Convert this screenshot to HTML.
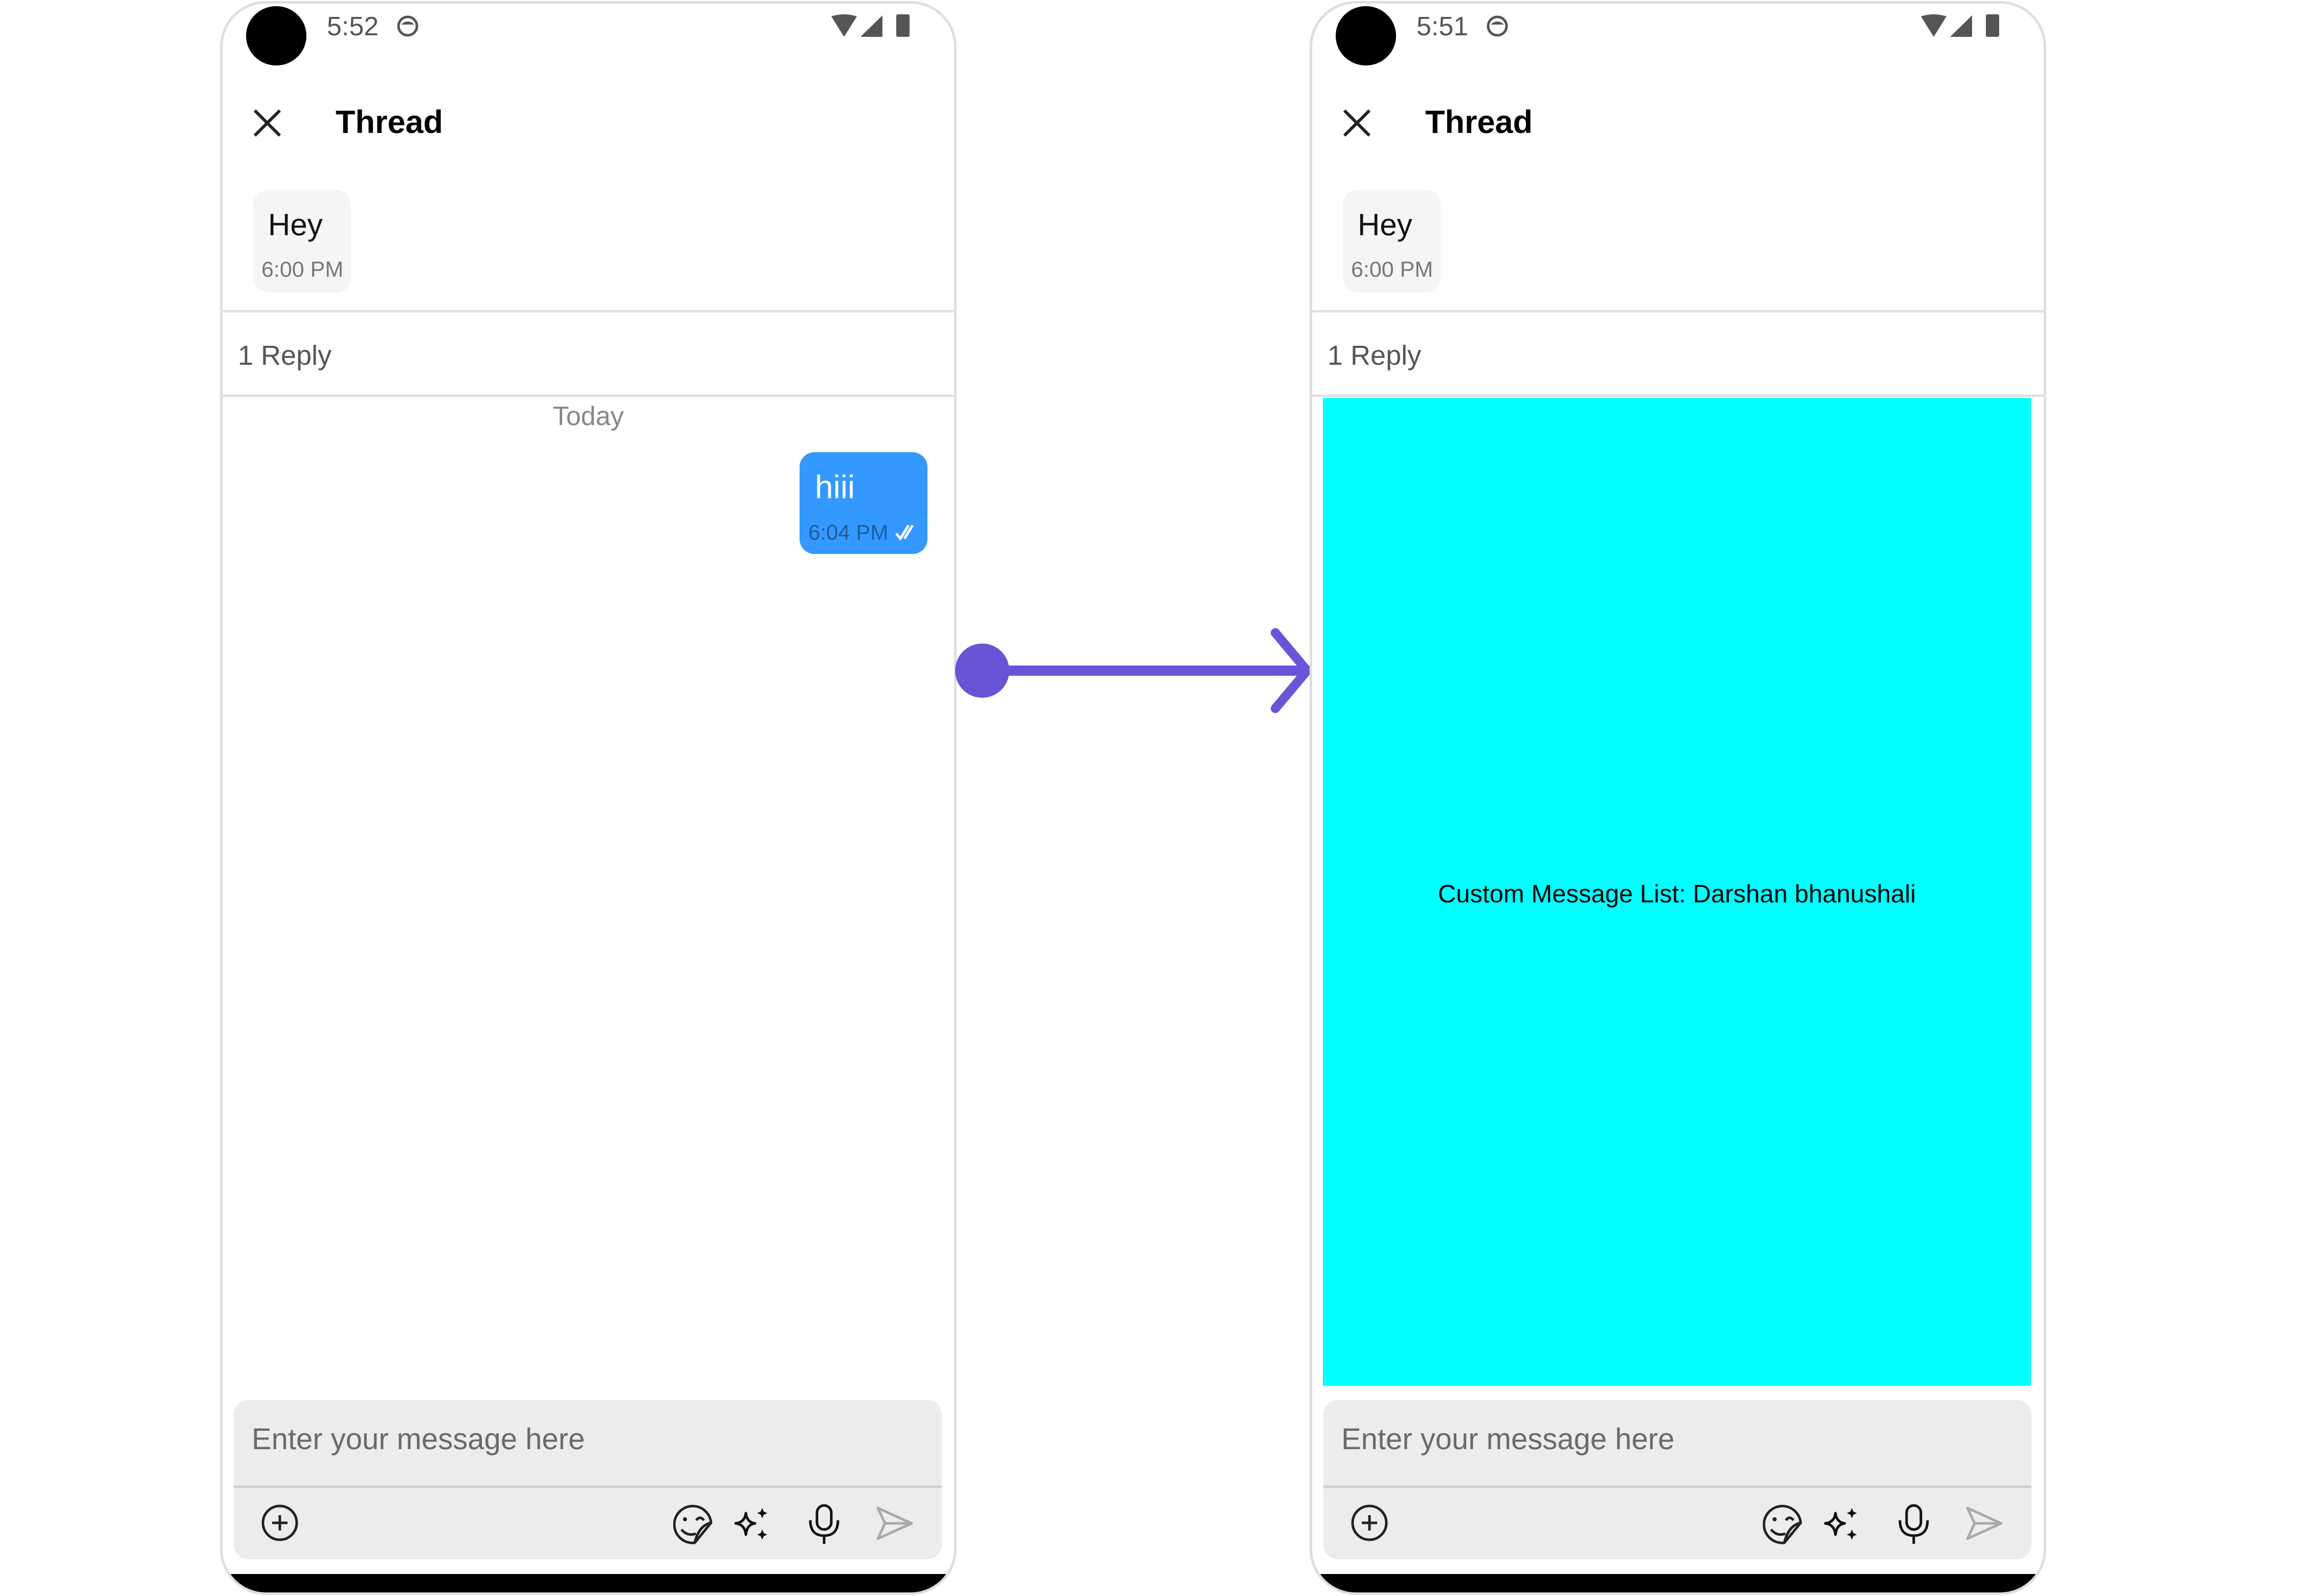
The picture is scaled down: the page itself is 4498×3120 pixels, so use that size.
<!DOCTYPE html>
<html><head><meta charset="utf-8"><style>
*{margin:0;padding:0;box-sizing:border-box}
body{width:4498px;height:3120px;background:#fff;position:relative;overflow:hidden;font-family:"Liberation Sans",sans-serif}
.ph{position:absolute;top:0;width:1440px;height:3120px}
.frame{position:absolute;left:0;top:2px;width:1440px;height:3116px;border:5px solid #dedede;border-radius:90px;overflow:hidden;background:#fff}
.a{position:absolute;white-space:nowrap}
.dv{position:absolute;left:0;width:1440px;height:5px;background:#e2e2e2}
</style></head><body>

<!-- LEFT PHONE -->
<div class="ph" style="left:430px">
 <div class="frame">
  <div class="a" style="left:0;top:3070px;width:1440px;height:60px;background:#000"></div>
  <div class="a" style="left:536px;top:3108px;width:378px;height:8px;background:#ddd;border-radius:4px"></div>
 </div>
 <div class="a" style="left:51px;top:12px;width:118px;height:116px;border-radius:50%;background:#000"></div>
 <div class="a" style="left:209px;top:22px;font-size:52px;color:#555">5:52</div>
 <svg class="a" style="left:344px;top:28px" width="46" height="46" viewBox="0 0 46 46"><circle cx="23" cy="23" r="18" fill="none" stroke="#555" stroke-width="5"/><path d="M10 20 Q23 8 36 20" fill="#555"/></svg>
 <svg class="a" style="left:1195px;top:28px" width="170" height="46" viewBox="0 0 170 46"><path d="M0 4 Q25 -4 50 4 L25 44Z" fill="#555"/><path d="M57 44 L100 2 L100 44Z" fill="#555"/><rect x="127" y="0" width="26" height="44" rx="3" fill="#555"/></svg>
 <svg class="a" style="left:65px;top:213px" width="55" height="55" viewBox="0 0 55 55"><path d="M3 3L52 52M52 3L3 52" stroke="#222" stroke-width="6"/></svg>
 <div class="a" style="left:226px;top:203px;font-size:63px;font-weight:bold;color:#000">Thread</div>
 <div class="a" style="left:65px;top:371px;width:191px;height:201px;background:#f5f5f5;border-radius:29px"></div>
 <div class="a" style="left:94px;top:405px;font-size:60px;color:#111">Hey</div>
 <div class="a" style="left:81px;top:503px;font-size:43px;color:#777">6:00 PM</div>
 <div class="dv" style="top:606px"></div>
 <div class="a" style="left:35px;top:664px;font-size:54px;color:#555">1 Reply</div>
 <div class="dv" style="top:771px"></div>
 <div class="a" style="left:0;width:1440px;text-align:center;top:784px;font-size:52px;color:#888">Today</div>
 <div class="a" style="left:1133px;top:884px;width:250px;height:199px;background:#3399ff;border-radius:29px"></div>
 <div class="a" style="left:1163px;top:915px;font-size:64px;color:#fff">hiii</div>
 <div class="a" style="left:1150px;top:1017px;font-size:42px;color:#1f5c9c">6:04 PM</div>
 <svg class="a" style="left:1320px;top:1023px" width="44" height="34" viewBox="0 0 44 34"><path d="M2 20L10 30L26 4M18 30L34 4" stroke="#fff" stroke-width="5" fill="none"/></svg>
 <!-- input -->
 <div class="a" style="left:27px;top:2737px;width:1384px;height:311px;background:#ececec;border-radius:28px"></div>
 <div class="a" style="left:27px;top:2904px;width:1384px;height:5px;background:#cfcfcf"></div>
 <div class="a" style="left:62px;top:2780px;font-size:58px;color:#6a6a6a">Enter your message here</div>
 <svg class="a" style="left:80px;top:2940px" width="74" height="74" viewBox="0 0 74 74"><circle cx="37" cy="37" r="33" fill="none" stroke="#222" stroke-width="5"/><path d="M37 22V52M22 37H52" stroke="#222" stroke-width="5"/></svg>
 <svg class="a" style="left:886px;top:2940px" width="80" height="80" viewBox="0 0 80 80"><path d="M74 37 A36 36 0 1 0 42 76 Z" fill="none" stroke="#222" stroke-width="5"/><path d="M74 37 Q50 42 42 76" fill="none" stroke="#222" stroke-width="5"/><circle cx="23" cy="30" r="4" fill="#222"/><path d="M45 32 Q52 22 60 32" fill="none" stroke="#222" stroke-width="5"/><path d="M16 50 Q28 64 44 58" fill="none" stroke="#222" stroke-width="5"/></svg>
 <svg class="a" style="left:1004px;top:2948px" width="68" height="64" viewBox="0 0 68 64"><path d="M24 10 Q26 28 42 30 Q26 32 24 52 Q22 32 4 30 Q22 28 24 10Z" fill="none" stroke="#111" stroke-width="5" stroke-linejoin="round"/><path d="M56 0 L59 7 L66 10 L59 13 L56 20 L53 13 L46 10 L53 7Z M56 42 L59 49 L66 52 L59 55 L56 62 L53 55 L46 52 L53 49Z" fill="#111"/></svg>
 <svg class="a" style="left:1150px;top:2940px" width="62" height="80" viewBox="0 0 62 80"><rect x="17" y="3" width="28" height="47" rx="14" fill="none" stroke="#111" stroke-width="5"/><path d="M4 32 Q4 62 31 62 Q58 62 58 32 M31 62V78" fill="none" stroke="#111" stroke-width="5"/></svg>
 <svg class="a" style="left:1282px;top:2944px" width="74" height="68" viewBox="0 0 74 68"><path d="M4 4 L70 34 L4 64 L18 34 Z M18 34 H70" fill="none" stroke="#a8a8a8" stroke-width="5" stroke-linejoin="round"/></svg>
</div>

<!-- ARROW -->
<svg class="a" style="left:1860px;top:1220px" width="720" height="180" viewBox="0 0 720 180"><circle cx="60" cy="91" r="53" fill="#6a54d6"/><rect x="60" y="81" width="636" height="20" fill="#6a54d6"/><path d="M633 17 L695 91 L633 165" fill="none" stroke="#6a54d6" stroke-width="18" stroke-linecap="round"/></svg>

<!-- RIGHT PHONE -->
<div class="ph" style="left:2560px">
 <div class="frame">
  <div class="a" style="left:0;top:3070px;width:1440px;height:60px;background:#000"></div>
  <div class="a" style="left:536px;top:3108px;width:378px;height:8px;background:#ddd;border-radius:4px"></div>
 </div>
 <div class="a" style="left:51px;top:12px;width:118px;height:116px;border-radius:50%;background:#000"></div>
 <div class="a" style="left:209px;top:22px;font-size:52px;color:#555">5:51</div>
 <svg class="a" style="left:344px;top:28px" width="46" height="46" viewBox="0 0 46 46"><circle cx="23" cy="23" r="18" fill="none" stroke="#555" stroke-width="5"/><path d="M10 20 Q23 8 36 20" fill="#555"/></svg>
 <svg class="a" style="left:1195px;top:28px" width="170" height="46" viewBox="0 0 170 46"><path d="M0 4 Q25 -4 50 4 L25 44Z" fill="#555"/><path d="M57 44 L100 2 L100 44Z" fill="#555"/><rect x="127" y="0" width="26" height="44" rx="3" fill="#555"/></svg>
 <svg class="a" style="left:65px;top:213px" width="55" height="55" viewBox="0 0 55 55"><path d="M3 3L52 52M52 3L3 52" stroke="#222" stroke-width="6"/></svg>
 <div class="a" style="left:226px;top:203px;font-size:63px;font-weight:bold;color:#000">Thread</div>
 <div class="a" style="left:65px;top:371px;width:191px;height:201px;background:#f5f5f5;border-radius:29px"></div>
 <div class="a" style="left:94px;top:405px;font-size:60px;color:#111">Hey</div>
 <div class="a" style="left:81px;top:503px;font-size:43px;color:#777">6:00 PM</div>
 <div class="dv" style="top:606px"></div>
 <div class="a" style="left:35px;top:664px;font-size:54px;color:#555">1 Reply</div>
 <div class="dv" style="top:771px"></div>
 <div class="a" style="left:26px;top:778px;width:1384px;height:1931px;background:#00ffff"></div>
 <div class="a" style="left:26px;width:1384px;text-align:center;top:1720px;font-size:49px;color:#000">Custom Message List: Darshan bhanushali</div>
 <!-- input -->
 <div class="a" style="left:27px;top:2737px;width:1384px;height:311px;background:#ececec;border-radius:28px"></div>
 <div class="a" style="left:27px;top:2904px;width:1384px;height:5px;background:#cfcfcf"></div>
 <div class="a" style="left:62px;top:2780px;font-size:58px;color:#6a6a6a">Enter your message here</div>
 <svg class="a" style="left:80px;top:2940px" width="74" height="74" viewBox="0 0 74 74"><circle cx="37" cy="37" r="33" fill="none" stroke="#222" stroke-width="5"/><path d="M37 22V52M22 37H52" stroke="#222" stroke-width="5"/></svg>
 <svg class="a" style="left:886px;top:2940px" width="80" height="80" viewBox="0 0 80 80"><path d="M74 37 A36 36 0 1 0 42 76 Z" fill="none" stroke="#222" stroke-width="5"/><path d="M74 37 Q50 42 42 76" fill="none" stroke="#222" stroke-width="5"/><circle cx="23" cy="30" r="4" fill="#222"/><path d="M45 32 Q52 22 60 32" fill="none" stroke="#222" stroke-width="5"/><path d="M16 50 Q28 64 44 58" fill="none" stroke="#222" stroke-width="5"/></svg>
 <svg class="a" style="left:1004px;top:2948px" width="68" height="64" viewBox="0 0 68 64"><path d="M24 10 Q26 28 42 30 Q26 32 24 52 Q22 32 4 30 Q22 28 24 10Z" fill="none" stroke="#111" stroke-width="5" stroke-linejoin="round"/><path d="M56 0 L59 7 L66 10 L59 13 L56 20 L53 13 L46 10 L53 7Z M56 42 L59 49 L66 52 L59 55 L56 62 L53 55 L46 52 L53 49Z" fill="#111"/></svg>
 <svg class="a" style="left:1150px;top:2940px" width="62" height="80" viewBox="0 0 62 80"><rect x="17" y="3" width="28" height="47" rx="14" fill="none" stroke="#111" stroke-width="5"/><path d="M4 32 Q4 62 31 62 Q58 62 58 32 M31 62V78" fill="none" stroke="#111" stroke-width="5"/></svg>
 <svg class="a" style="left:1282px;top:2944px" width="74" height="68" viewBox="0 0 74 68"><path d="M4 4 L70 34 L4 64 L18 34 Z M18 34 H70" fill="none" stroke="#a8a8a8" stroke-width="5" stroke-linejoin="round"/></svg>
</div>
</body></html>
